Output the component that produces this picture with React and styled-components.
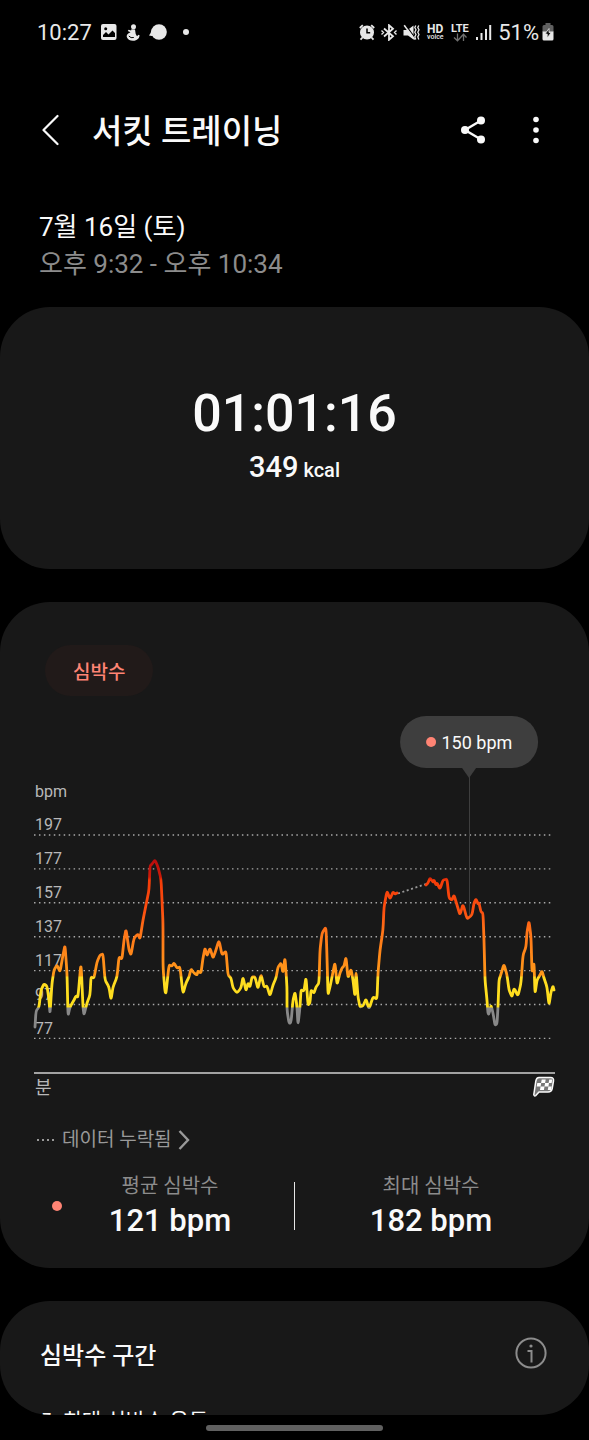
import styled, { createGlobalStyle } from 'styled-components';

const GlobalStyle = createGlobalStyle`
  *, *::before, *::after {
    box-sizing: border-box;
  }
  body {
    margin: 0;
    background: #000;
    color: #fafafa;
    font-family: Roboto, 'Noto Sans CJK KR', sans-serif;
  }
  h1, h2, p, dl, dd, dt {
    margin: 0;
    font-weight: 400;
  }
  button {
    padding: 0;
    border: 0;
    background: none;
    color: inherit;
    font: inherit;
    cursor: pointer;
  }
  svg {
    display: block;
  }
`;

const Screen = styled.div`
  display: flex;
  flex-direction: column;
  height: 100vh;
  min-height: 1340px;
  overflow: hidden;
`;

const StatusBar = styled.div`
  display: flex;
  align-items: center;
  justify-content: space-between;
  height: 64px;
  padding: 0 35px 0 37px;
  color: #e8e8e8;
  font-size: 22px;
`;

const StatusGroup = styled.div`
  display: flex;
  align-items: center;
  gap: ${({ $gap }) => $gap}px;
`;

const Battery = styled.span`
  display: flex;
  align-items: center;
  gap: 3px;
`;

const TopBar = styled.header`
  display: flex;
  align-items: center;
  height: 132px;
  padding: 0 43px 0 40px;
`;

const Title = styled.h1`
  flex: 1;
  margin-left: 32px;
  padding-top: 4px;
  font-size: 33px;
  font-weight: 500;
  line-height: 48px;
`;

const IconButton = styled.button`
  display: flex;
  align-items: center;
  justify-content: center;
  min-width: 20px;
  height: 48px;
`;

const Actions = styled.div`
  display: flex;
  gap: 40px;
`;

const DateBlock = styled.div`
  padding: 13px 39px 24px;
  font-size: 26px;
  line-height: 37px;
`;

const TimeRange = styled.p`
  color: #8c8c8c;
`;

const Card = styled.section`
  flex: none;
  margin-bottom: 33px;
  border-radius: 50px;
  background: #181818;
`;

const SummaryCard = styled(Card)`
  display: flex;
  flex-direction: column;
  align-items: center;
  padding: 75px 40px 81px;
`;

const Duration = styled.p`
  font-size: 52px;
  font-weight: 500;
  line-height: 64px;
`;

const Calories = styled.p`
  font-size: 29px;
  font-weight: 500;
  line-height: 42px;

  small {
    margin-left: 5px;
    font-size: 20px;
    line-height: 1;
  }
`;

const HeartCard = styled(Card)`
  padding: 43px 0 27px;
`;

const Chip = styled.button`
  && {
    display: block;
    height: 51px;
    margin-left: 45px;
    padding: 0 28px;
    border-radius: 26px;
    background: #211a19;
    color: #ff8474;
    font-size: 19px;
    font-weight: 500;
  }
`;

const ChartWrap = styled.div`
  position: relative;
  margin-top: 4px;

  > svg {
    width: 100%;
    height: auto;
  }
`;

const Tooltip = styled.div`
  position: absolute;
  top: 16px;
  left: 79.7%;
  display: flex;
  align-items: center;
  gap: 5px;
  height: 52px;
  padding: 0 26px;
  border-radius: 26px;
  background: #3e3e3e;
  font-size: 18px;
  white-space: nowrap;
  transform: translateX(-50%);

  &::after {
    content: '';
    position: absolute;
    top: 100%;
    left: calc(50% - 7px);
    border: 7px solid transparent;
    border-top: 10px solid #3e3e3e;
    border-bottom: 0;
  }
`;

const Dot = styled.span`
  flex: none;
  width: 10px;
  height: 10px;
  border-radius: 50%;
  background: #ff8474;
`;

const MissingButton = styled.button`
  && {
    display: flex;
    align-items: center;
    gap: 6px;
    margin: 26px 0 0 37px;
    color: #999;
    font-size: 19px;
    line-height: 28px;
  }
`;

const Stats = styled.div`
  display: grid;
  grid-template-columns: 1fr 1px 1fr;
  align-items: center;
  margin-top: 17px;
`;

const StatHalf = styled.div`
  display: flex;
  align-items: center;
  padding: ${({ $first }) => ($first ? '0 16px 0 52px' : '0 22px 0 0')};
`;

const Divider = styled.span`
  height: 48px;
  background: #e6e6e6;
`;

const Stat = styled.dl`
  flex: 1;
  text-align: center;

  dt {
    color: #8c8c8c;
    font-size: 20px;
    line-height: 30px;
  }

  dd {
    font-size: 31px;
    font-weight: 500;
    line-height: 40px;
  }
`;

const ZoneCard = styled(Card)`
  flex: 1;
  min-height: 0;
  margin-bottom: 0;
  padding: 28px 42px 0 40px;
  overflow: hidden;
`;

const ZoneHeader = styled.div`
  display: flex;
  align-items: center;
  justify-content: space-between;
  height: 48px;

  h2 {
    font-size: 24px;
    font-weight: 500;
  }
`;

const ZoneLabel = styled.p`
  margin-top: 30px;
  font-size: 21px;
  line-height: 28px;
`;

const NavBar = styled.div`
  display: flex;
  flex: none;
  justify-content: center;
  height: 25px;
  padding-top: 10px;

  &::before {
    content: '';
    width: 30%;
    height: 6px;
    border-radius: 3px;
    background: #606060;
  }
`;

const gridLabels = [197, 177, 157, 137, 117, 97, 77];

// x, y pairs on the 589 wide chart canvas
const beforeGap = `
  35,327 36,311 39,307 41,290 44,284 47,286 49,300 50,314 52,283 54,270 57,265 60,272
  63,255 65,245 67,273 68,316 70,307 74,300 76,296 78,297 81,262 83,307 84,315 87,303
  90,295 91,277 94,278 97,262 100,255 103,254 105,280 109,287 111,300 113,287 117,277
  119,257 122,259 124,240 126,229 129,250 131,255 134,238 138,234 140,239 143,220
  147,200 149,190 150,166 152,164 155,160 158,167 161,179 162,200 163,223 163,267
  165,292 166,293 169,265 172,266 174,263 177,268 180,267 183,294 186,283 189,277
  191,269 194,273 197,275 198,271 201,273 203,258 205,248 207,256 210,248 213,258
  215,253 219,240 222,255 226,251 228,275 231,278 233,288 237,293 241,288 243,277
  246,291 248,283 250,287 252,277 255,277 258,289 261,274 264,287 267,286 270,296
  273,285 276,278 278,267 281,263 283,273 285,257 287,287 287,310 289,323 291,323
  293,300 295,292 297,307 298,325 300,307 301,290 304,291 306,277 308,305 310,303
  311,290 314,293 316,287 319,283 320,250 322,233 326,227 327,257 328,295 330,287
  332,277 335,262 337,285 340,273 342,268 344,266 346,257 348,278 351,269 353,280
  355,297 356,270 358,297 360,307 363,306 366,299 369,309 373,297 377,299 378,273
  380,250 383,230 384,207 387,191 390,199 393,192 395,194 397,193`;

const afterGap = `
  426,185 428,183 430,178 433,182 434,180 436,185 437,183 440,189 443,180 447,179
  449,198 452,200 454,195 457,205 460,215 463,204 467,219 472,215 474,203 476,199
  478,204 479,203 481,212 483,213 484,240 485,280 487,300 488,314 489,314 491,305
  493,313 495,325 497,324 498,307 499,280 501,274 504,264 507,275 509,290 512,297
  514,288 518,296 521,283 523,255 526,247 527,232 529,221 531,237 532,273 534,262
  535,294 537,280 540,275 542,271 544,278 547,287 549,305 551,292 553,286 554,290`;

// turns a list of samples into a path with softened corners
function smoothPath(samples) {
  const pts = samples
    .trim()
    .split(/\s+/)
    .map((pair) => pair.split(',').map(Number));
  let d = `M${pts[0]}`;
  for (let i = 1; i < pts.length - 1; i++) {
    const [x, y] = pts[i];
    const [px, py] = pts[i - 1];
    const [nx, ny] = pts[i + 1];
    // a quarter of the way towards each neighbour
    d += ` L${x + (px - x) / 4},${y + (py - y) / 4}`;
    d += ` Q${x},${y} ${x + (nx - x) / 4},${y + (ny - y) / 4}`;
  }
  return `${d} L${pts[pts.length - 1]}`;
}

function HeartRateChart() {
  return (
    <svg viewBox="0 0 589 400" role="img" aria-label="심박수 그래프">
      <defs>
        <linearGradient id="rate" gradientUnits="userSpaceOnUse" x1="0" y1="160" x2="0" y2="330">
          <stop offset="0" stopColor="#b80d0d" />
          <stop offset="0.1" stopColor="#cc1a08" />
          <stop offset="0.12" stopColor="#f53c08" />
          <stop offset="0.3" stopColor="#fb4f10" />
          <stop offset="0.42" stopColor="#ff7418" />
          <stop offset="0.68" stopColor="#ff9a1a" />
          <stop offset="0.69" stopColor="#ffdc22" />
          <stop offset="0.865" stopColor="#ffe01c" />
          <stop offset="0.87" stopColor="#888" />
          <stop offset="1" stopColor="#888" />
        </linearGradient>
      </defs>
      <g fill="#b8b8b8" fontSize="16">
        <text x="35" y="97">bpm</text>
        {gridLabels.map((label, i) => (
          <text key={label} x="35" y={130 + i * 34}>{label}</text>
        ))}
        <text x="35" y="394" fontSize="18">분</text>
      </g>
      {gridLabels.map((label, i) => (
        <line key={label} x1="34" x2="552" y1={135 + i * 33.9} y2={135 + i * 33.9} stroke="#a8a8a8" strokeWidth="1.4" strokeDasharray="1.5 3.45" />
      ))}
      <line x1="469.5" x2="469.5" y1="70" y2="215" stroke="#3e3e3e" />
      <line x1="34" x2="555" y1="373" y2="373" stroke="#d0d0d0" strokeWidth="1.6" />
      <line x1="398" x2="426" y1="193.5" y2="184" stroke="#999" strokeWidth="1.8" strokeDasharray="2 2.6" />
      <g fill="none" stroke="url(#rate)" strokeWidth="2.8" strokeLinecap="round" strokeLinejoin="round">
        <path d={smoothPath(beforeGap)} />
        <path d={smoothPath(afterGap)} />
      </g>
      <g>
        <path d="M539 377.5h11.5q3.6 0 3 3.5l-1.3 7.5q-.6 3.5-4.2 3.5h-9l-3.2 3.6q-1.6 1-2-1l2-13.5q.6-3.6 3.2-3.6z" fill="#777" stroke="#fafafa" strokeWidth="1.5" strokeLinejoin="round" />
        <path d="M541.7 379.5h4l-.6 3.5h-4zM549.3 379.5h3l-.7 3.5h-3zM537.3 383h3.9l-.6 3.5h-3.9zM545.1 383h3.9l-.6 3.5h-3.9zM540.6 386.5h3.9l-.6 3.5h-3.9zM548.4 386.5h3.2l-.6 3.5h-3.2z" fill="#fff" />
      </g>
    </svg>
  );
}

function PictureIcon() {
  return (
    <svg width="16" height="16" viewBox="0 0 16 16" aria-hidden="true">
      <rect width="15.5" height="16" rx="2" fill="currentColor" />
      <path d="M2 13V11l3-3 2.5 2.5L11.500 6.500 14 9v4z" fill="#000" />
      <circle cx="4.700" cy="4.800" r="1.500" fill="#000" />
    </svg>
  );
}

function ActivityIcon() {
  return (
    <svg width="14" height="17" viewBox="0 0 14 17" fill="currentColor" aria-hidden="true">
      <circle cx="7.500" cy="2.800" r="2.500" />
      <path d="M5.500 5.300l3.500.2.700 4.500 1.300 2.200 1.500-1.500 1.200.8q-1 4.500-5.200 5.200-5.500.7-7.500-3.200-1-2.500 1.200-4l2.300-1.300-2.700-1.200.8-1.200 2.500.8z" />
      <path d="M2.800 12q2 2.500 5 1.500" fill="none" stroke="#000" />
    </svg>
  );
}

function BubbleIcon() {
  return (
    <svg width="18" height="16" viewBox="0 0 18 16" fill="currentColor" aria-hidden="true">
      <circle cx="10" cy="8" r="7.800" />
      <path d="M3 4.500Q2 9 0 11.500q3 .8 5 0z" />
    </svg>
  );
}

function AlarmIcon() {
  return (
    <svg width="16" height="17" viewBox="0 0 16 17" fill="none" stroke="currentColor" strokeWidth="1.8" aria-hidden="true">
      <circle cx="8" cy="8.500" r="7" fill="currentColor" stroke="none" />
      <path d="M.8 4l3-2.800M15.200 4l-3-2.800M3.500 13.500l-2 2.200M12.500 13.500l2 2.200" />
      <path d="M8 4.500v4.200h3.200" stroke="#000" strokeWidth="1.500" />
    </svg>
  );
}

function BluetoothIcon() {
  return (
    <svg width="16" height="17" viewBox="0 0 16 17" fill="none" stroke="currentColor" strokeWidth="1.800" aria-hidden="true">
      <path d="M3 4.500l9 7.800-4 3.500V1.200l4 3.500-9 7.800" />
      <path d="M.5 6.500l2 2-2 2M15.500 6.500l-2 2 2 2" strokeWidth="1.400" />
    </svg>
  );
}

function MuteIcon() {
  return (
    <svg width="17" height="17" viewBox="0 0 17 17" fill="none" stroke="currentColor" aria-hidden="true">
      <path d="M.5 6h4L10.500 1.500v14L5 11.500H.5z" fill="currentColor" stroke="none" />
      <path d="M2.500.8l9.500 13" stroke="#000" strokeWidth="1.200" />
      <path d="M1.200 1.200l10.500 14.300" strokeWidth="1.500" />
      <path d="M12.800 1.500l-1 2 1.200 2.300-1.200 2.400 1.200 2.300-1.200 2.400 1 2.600M15.800 1.500l-1 2 1.200 2.300-1.200 2.400 1.200 2.300-1.200 2.400 1 2.600" strokeWidth="1.300" />
    </svg>
  );
}

function HdVoiceIcon() {
  return (
    <svg width="19" height="24" viewBox="0 0 19 24" fill="currentColor" aria-hidden="true">
      <text x="1" y="13" fontSize="12" fontWeight="700">HD</text>
      <text x="1" y="19" fontSize="7" fontWeight="500">voice</text>
    </svg>
  );
}

function LteIcon() {
  return (
    <svg width="19" height="22" viewBox="0 0 19 22" fill="currentColor" aria-hidden="true">
      <text x="0" y="11" fontSize="11" fontWeight="700">LTE</text>
      <path d="M6.500 12.500v7M3 16.500l3.500 3.300 3.700-4M12.500 20v-7M9.500 16.500l3-3.300 3 3.300" fill="none" stroke="#707070" strokeWidth="1.300" />
    </svg>
  );
}

function SignalIcon() {
  return (
    <svg width="16" height="17" viewBox="0 0 16 17" fill="currentColor" aria-hidden="true">
      <path d="M0 13h2v3H0zM4.500 9h2v7h-2zM9 5h2v11H9zM13.200 1h2v15h-2z" />
    </svg>
  );
}

function BatteryIcon() {
  return (
    <svg width="12" height="18" viewBox="0 0 12 18" aria-hidden="true">
      <path d="M3.500 0h5v2H10q1.500 0 1.500 1.500V9H.5V3.500Q.5 2 2 2h1.500z" fill="#606060" />
      <path d="M.5 8.500h11v7.500q0 1.500-1.500 1.500H2Q.5 17.500.5 16z" fill="currentColor" />
      <path d="M7 5.500L3 11h2.200v4L9.200 9.500H7z" fill="#111" stroke="#e8e8e8" strokeWidth=".8" />
    </svg>
  );
}

function InfoIcon() {
  return (
    <svg width="32" height="32" viewBox="0 0 32 32" fill="none" stroke="#8c8c8c" strokeWidth="2" aria-hidden="true">
      <circle cx="16" cy="16" r="14.600" />
      <path d="M12.500 14h4v11.500" />
      <circle cx="16" cy="9" r="1.600" fill="#8c8c8c" stroke="none" />
    </svg>
  );
}

export default function App() {
  return (
    <>
      <GlobalStyle />
      <Screen>
        <StatusBar>
          <StatusGroup $gap={9}>
            <span>10:27</span>
            <PictureIcon />
            <ActivityIcon />
            <BubbleIcon />
            <svg width="20" height="6" viewBox="0 0 20 6" aria-hidden="true">
              <circle cx="10" cy="3" r="3" fill="currentColor" />
            </svg>
          </StatusGroup>
          <StatusGroup $gap={6}>
            <AlarmIcon />
            <BluetoothIcon />
            <MuteIcon />
            <HdVoiceIcon />
            <LteIcon />
            <SignalIcon />
            <Battery>
              51%
              <BatteryIcon />
            </Battery>
          </StatusGroup>
        </StatusBar>

        <TopBar>
          <IconButton aria-label="뒤로">
            <svg width="18" height="32" viewBox="0 0 18 32" fill="none" stroke="currentColor" strokeWidth="2.2" strokeLinecap="round" strokeLinejoin="round">
              <path d="M16.500 2L2.500 16l14 14" />
            </svg>
          </IconButton>
          <Title>서킷 트레이닝</Title>
          <Actions>
            <IconButton aria-label="공유">
              <svg width="26" height="28" viewBox="0 0 26 28" fill="currentColor" stroke="currentColor">
                <path d="M21 4.500L5 14l16 9.500" fill="none" strokeWidth="2.400" />
                <g stroke="none">
                  <circle cx="21" cy="4.500" r="4" />
                  <circle cx="5" cy="14" r="4" />
                  <circle cx="21" cy="23.500" r="4" />
                </g>
              </svg>
            </IconButton>
            <IconButton aria-label="더보기">
              <svg width="6" height="28" viewBox="0 0 6 28" fill="currentColor">
                <circle cx="3" cy="3.500" r="2.800" />
                <circle cx="3" cy="14" r="2.800" />
                <circle cx="3" cy="24.500" r="2.800" />
              </svg>
            </IconButton>
          </Actions>
        </TopBar>

        <DateBlock>
          <p>7월 16일 (토)</p>
          <TimeRange>오후 9:32 - 오후 10:34</TimeRange>
        </DateBlock>

        <SummaryCard>
          <Duration>01:01:16</Duration>
          <Calories>
            349<small>kcal</small>
          </Calories>
        </SummaryCard>

        <HeartCard>
          <Chip>심박수</Chip>
          <ChartWrap>
            <HeartRateChart />
            <Tooltip>
              <Dot />
              150 bpm
            </Tooltip>
          </ChartWrap>
          <MissingButton>
            <svg width="19" height="2" viewBox="0 0 19 2" fill="#999" aria-hidden="true">
              <path d="M0 0h2v2H0zM5 0h2v2H5zM10 0h2v2h-2zM15 0h2v2h-2z" />
            </svg>
            데이터 누락됨
            <svg width="12" height="20" viewBox="0 0 12 20" fill="none" stroke="#999" strokeWidth="2.400" aria-hidden="true">
              <path d="M1.500 1l8.500 9-8.500 9" />
            </svg>
          </MissingButton>
          <Stats>
            <StatHalf $first>
              <Dot />
              <Stat>
                <dt>평균 심박수</dt>
                <dd>121 bpm</dd>
              </Stat>
            </StatHalf>
            <Divider />
            <StatHalf>
              <Stat>
                <dt>최대 심박수</dt>
                <dd>182 bpm</dd>
              </Stat>
            </StatHalf>
          </Stats>
        </HeartCard>

        <ZoneCard>
          <ZoneHeader>
            <h2>심박수 구간</h2>
            <IconButton aria-label="정보">
              <InfoIcon />
            </IconButton>
          </ZoneHeader>
          <ZoneLabel>5. 최대 심박수 운동</ZoneLabel>
        </ZoneCard>
        <NavBar />
      </Screen>
    </>
  );
}
